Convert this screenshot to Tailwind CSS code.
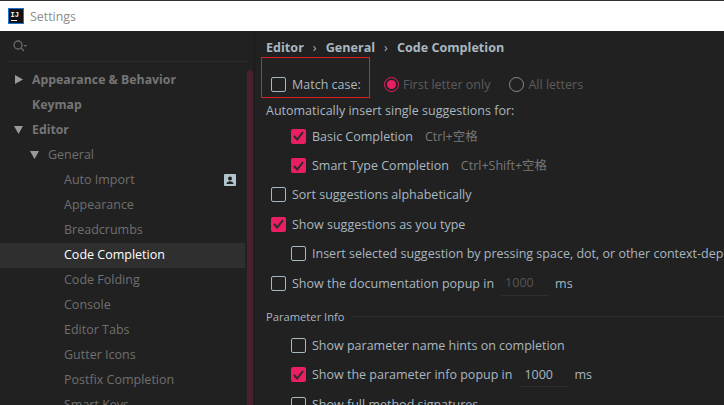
<!DOCTYPE html>
<html lang="en">
<head>
  <meta charset="UTF-8" />
  <title>Settings</title>
  <script src="https://cdn.jsdelivr.net/npm/@tailwindcss/browser@4"></script>
</head>
<body class="w-[724px] h-[405px] overflow-hidden bg-[#212121] text-[12.5px] leading-[17px] font-['Open_Sans','Noto_Sans_CJK_SC',sans-serif] text-[#a9b7c0]">
  <!-- Title bar -->
  <header class="h-[31px] border-t border-[#333] bg-white flex items-center pl-2 gap-[6px]">
    <svg width="16" height="16" viewBox="0 0 16 16">
      <rect x="0.5" y="0.5" width="15" height="15" fill="#111" stroke="#1a73d9"/>
      <text x="2.5" y="8.5" font-size="7" font-weight="700" fill="#fff" font-family="Liberation Mono">IJ</text>
      <rect x="3" y="12" width="6" height="1" fill="#fff"/>
    </svg>
    <span class="text-[#8c8c8c] text-[12.4px]">Settings</span>
  </header>

  <div class="flex h-[374px]">
    <!-- Sidebar -->
    <aside class="w-[255px] shrink-0 border-r border-[#1a1a1a] relative overflow-hidden">
      <div class="h-[31px] mx-[6px] border-b border-[#2b2b2b] flex items-center pl-[6px]">
        <svg width="16" height="14" viewBox="0 0 16 14" fill="none">
          <circle cx="6" cy="6" r="4" stroke="#6a6a6a" stroke-width="1.3"/>
          <path d="M9 9l3 3" stroke="#6a6a6a" stroke-width="1.3"/>
          <path d="M11.500 6h3.500l-1.750 2z" fill="#6a6a6a"/>
        </svg>
      </div>
      <ul class="pt-[6px] w-[245px] text-[#6f6f6f]">
        <li class="h-[25px] pb-[2px] flex items-center pl-[15px] gap-[9px] font-bold text-[12.3px] text-[#757575]">
          <svg width="8" height="9" viewBox="0 0 8 9"><path d="M0 0l8 4.500L0 9z" fill="#9a9a9a"/></svg>
          <span>Appearance &amp; Behavior</span>
        </li>
        <li class="h-[25px] pb-[2px] flex items-center pl-[32px] font-bold text-[12.3px] text-[#757575]">Keymap</li>
        <li class="h-[25px] pb-[2px] flex items-center pl-[14px] gap-[9px] font-bold text-[12.3px] text-[#757575]">
          <svg width="9" height="8" viewBox="0 0 9 8"><path d="M0 0h9L4.500 8z" fill="#9a9a9a"/></svg>
          <span>Editor</span>
        </li>
        <li class="h-[25px] pb-[2px] flex items-center pl-[30px] gap-[9px]">
          <svg width="9" height="8" viewBox="0 0 9 8"><path d="M0 0h9L4.500 8z" fill="#9a9a9a"/></svg>
          <span>General</span>
        </li>
        <li class="h-[25px] pb-[2px] flex items-center justify-between pl-[64px] pr-[9px]">
          <span>Auto Import</span>
          <svg width="12" height="12" viewBox="0 0 12 12">
            <rect width="12" height="12" rx="1" fill="#b4c4cc"/>
            <circle cx="6" cy="4.500" r="2" fill="#212121"/>
            <path d="M2.500 10c0-2 2-2.800 3.500-2.800s3.500.8 3.500 2.800z" fill="#212121"/>
          </svg>
        </li>
        <li class="h-[25px] pb-[2px] flex items-center pl-[64px]">Appearance</li>
        <li class="h-[25px] pb-[2px] flex items-center pl-[64px]">Breadcrumbs</li>
        <li class="h-[25px] pb-[2px] flex items-center pl-[64px] bg-[#2f2f2f] text-white">Code Completion</li>
        <li class="h-[25px] pb-[2px] flex items-center pl-[64px]">Code Folding</li>
        <li class="h-[25px] pb-[2px] flex items-center pl-[64px]">Console</li>
        <li class="h-[25px] pb-[2px] flex items-center pl-[64px]">Editor Tabs</li>
        <li class="h-[25px] pb-[2px] flex items-center pl-[64px]">Gutter Icons</li>
        <li class="h-[25px] pb-[2px] flex items-center pl-[64px]">Postfix Completion</li>
        <li class="h-[25px] pb-[2px] flex items-center pl-[64px]">Smart Keys</li>
      </ul>
      <div class="absolute left-[247px] top-[39px] w-[6px] h-[340px] rounded-[3px] bg-[#4a1f30]"></div>
    </aside>

    <!-- Content -->
    <main class="flex-1 min-w-0 overflow-hidden whitespace-nowrap pl-[11px]">
      <nav class="h-[33px] flex items-center font-bold text-[12.6px] text-[#a9b7c0]">
        <span>Editor</span><span class="mx-[9px] font-normal">›</span><span>General</span><span class="mx-[9px] font-normal">›</span><span>Code Completion</span>
      </nav>
      <div class="flex items-center h-[40px] relative">
        <div class="absolute -left-[5px] -top-[7px] w-[109px] h-[41px] border border-[#e02020]"></div>
        <span class="shrink-0 w-[15px] h-[15px] ml-[5px] mr-[6px] rounded-[2px] border border-[#a9b7c0]"></span>
        <span class="w-[69px]">Match case:</span>
        <span class="shrink-0 w-[15px] h-[15px] ml-[23px] mr-[4px] rounded-full border border-[#e91e63] flex items-center justify-center"><span class="w-[9px] h-[9px] rounded-full bg-[#e91e63]"></span></span>
        <span class="text-[#5c5c5c]">First letter only</span>
        <span class="shrink-0 w-[15px] h-[15px] ml-[19px] mr-[4px] rounded-full border border-[#8a8a8a]"></span>
        <span class="text-[#5c5c5c]">All letters</span>
      </div>
      <div class="h-[13px] flex items-center">Automatically insert single suggestions for:</div>

      <div class="mt-[4.5px] h-[29.4px] flex items-center pl-[25px]">
        <span class="shrink-0 w-[15px] h-[15px] mr-[6px] rounded-[2px] bg-[#e91e63] flex items-center justify-center">
          <svg width="11" height="10" viewBox="0 0 11 10" fill="none"><path d="M1 5l3.200 3.500L10 1" stroke="#2b2b2b" stroke-width="2"/></svg>
        </span>
        <span>Basic Completion</span>
        <span class="ml-[12px] text-[#787878]">Ctrl+空格</span>
      </div>
      <div class="h-[29.4px] flex items-center pl-[25px]">
        <span class="shrink-0 w-[15px] h-[15px] mr-[6px] rounded-[2px] bg-[#e91e63] flex items-center justify-center">
          <svg width="11" height="10" viewBox="0 0 11 10" fill="none"><path d="M1 5l3.200 3.500L10 1" stroke="#2b2b2b" stroke-width="2"/></svg>
        </span>
        <span>Smart Type Completion</span>
        <span class="ml-[12px] text-[#787878]">Ctrl+Shift+空格</span>
      </div>
      <div class="h-[29.4px] flex items-center pl-[5px]">
        <span class="shrink-0 w-[15px] h-[15px] mr-[6px] rounded-[2px] border border-[#a9b7c0]"></span>
        <span>Sort suggestions alphabetically</span>
      </div>
      <div class="h-[29.4px] flex items-center pl-[5px]">
        <span class="shrink-0 w-[15px] h-[15px] mr-[6px] rounded-[2px] bg-[#e91e63] flex items-center justify-center">
          <svg width="11" height="10" viewBox="0 0 11 10" fill="none"><path d="M1 5l3.200 3.500L10 1" stroke="#2b2b2b" stroke-width="2"/></svg>
        </span>
        <span>Show suggestions as you type</span>
      </div>
      <div class="h-[29.4px] flex items-center pl-[25px]">
        <span class="shrink-0 w-[15px] h-[15px] mr-[6px] rounded-[2px] border border-[#a9b7c0]"></span>
        <span>Insert selected suggestion by pressing space, dot, or other context-dependent keys</span>
      </div>
      <div class="h-[29.4px] flex items-center pl-[5px]">
        <span class="shrink-0 w-[15px] h-[15px] mr-[6px] rounded-[2px] border border-[#a9b7c0]"></span>
        <span>Show the documentation popup in</span>
        <span class="ml-[7px] w-[48px] h-[25px] pl-[4px] flex items-center border-b border-[#2e2e2e] text-[#555]">1000</span>
        <span class="ml-[6px]">ms</span>
      </div>

      <div class="mt-[4px] h-[30px] flex items-center gap-[6px] text-[11.2px]">
        <span>Parameter Info</span>
        <span class="flex-1 h-px bg-[#2e2e2e]"></span>
      </div>
      <div class="-mt-px h-[29.4px] flex items-center pl-[25px]">
        <span class="shrink-0 w-[15px] h-[15px] mr-[6px] rounded-[2px] border border-[#a9b7c0]"></span>
        <span>Show parameter name hints on completion</span>
      </div>
      <div class="h-[29.4px] flex items-center pl-[25px]">
        <span class="shrink-0 w-[15px] h-[15px] mr-[6px] rounded-[2px] bg-[#e91e63] flex items-center justify-center">
          <svg width="11" height="10" viewBox="0 0 11 10" fill="none"><path d="M1 5l3.200 3.500L10 1" stroke="#2b2b2b" stroke-width="2"/></svg>
        </span>
        <span>Show the parameter info popup in</span>
        <span class="ml-[8px] w-[48px] h-[25px] pl-[4px] flex items-center border-b border-[#2e2e2e]">1000</span>
        <span class="ml-[6px]">ms</span>
      </div>
      <div class="h-[29.4px] flex items-center pl-[25px]">
        <span class="shrink-0 w-[15px] h-[15px] mr-[6px] rounded-[2px] border border-[#a9b7c0]"></span>
        <span>Show full method signatures</span>
      </div>
    </main>
  </div>
</body>
</html>
